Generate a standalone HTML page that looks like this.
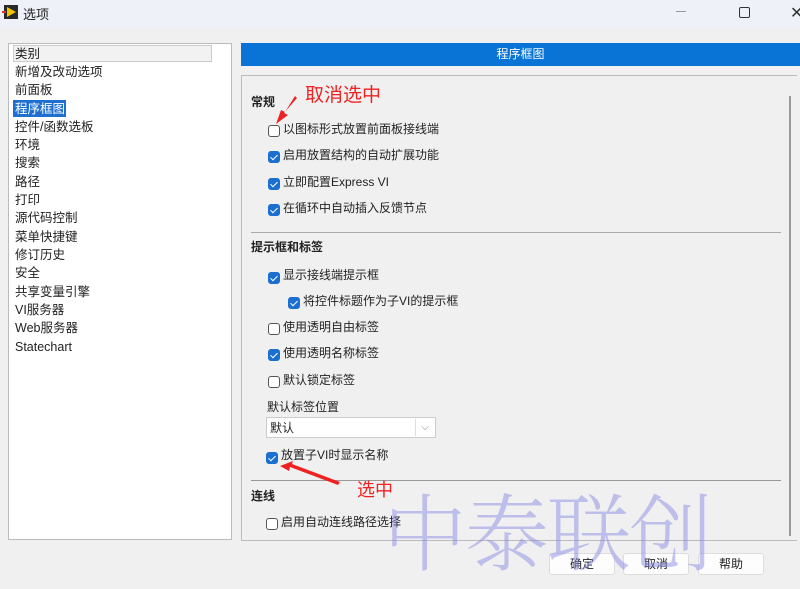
<!DOCTYPE html>
<html><head><meta charset="utf-8"><style>
*{margin:0;padding:0;box-sizing:border-box}
body{width:800px;height:579px;background:#f0f0f0;font-family:"Liberation Sans","Noto Sans CJK SC",sans-serif;font-size:12px;color:#222;position:relative;overflow:hidden}
.abs{position:absolute}
.title{left:0;top:0;width:800px;height:27px;background:#eef1f7}
.list{left:8px;top:43px;width:224px;height:497px;background:#fff;border:1px solid #bbb}
.item{position:absolute;left:6px;font-size:12.5px;line-height:16px;white-space:nowrap}
.cb{position:absolute;width:12px;height:12px;border:1px solid #555;border-radius:3px;background:#fff}
.cb.on{background:#1a6fd1;border-color:#1a6fd1}
.cb.on:after{content:"";position:absolute;left:3px;top:1px;width:3px;height:6px;border:solid #fff;border-width:0 1.5px 1.5px 0;transform:rotate(45deg)}
.lbl{position:absolute;font-size:12px;white-space:nowrap;line-height:14px}
.h{position:absolute;font-weight:bold;font-size:12px}
.btn{position:absolute;top:553px;width:66px;height:22px;background:#fdfdfd;border:1px solid #ddd;border-radius:3px;text-align:center;line-height:20px;font-size:12px}
</style></head><body>
<div class="abs title"></div>
<svg class="abs" style="left:2px;top:3px" width="18" height="18"><rect x="2" y="2" width="14" height="14" fill="#2a2a2a"/><polygon points="5,4 14,9 5,14" fill="#f5c400"/><rect x="0" y="8" width="4" height="2" fill="#d33"/></svg>
<div class="abs" style="left:23px;top:4px;font-size:13px">选项</div>
<div class="abs" style="left:676px;top:11px;width:10px;height:1px;background:#999"></div>
<div class="abs" style="left:739px;top:7px;width:11px;height:11px;border:1.5px solid #333;border-radius:2px"></div>
<div class="abs" style="left:790px;top:3px;font-size:16px;color:#333">✕</div>

<div class="abs list">
 <div class="abs" style="left:4px;top:1px;width:199px;height:17px;background:#f2f2f2;border:1px solid #ccc"></div>
 <div class="item" style="top:2px">类别</div>
 <div class="item" style="top:20px">新增及改动选项</div>
 <div class="item" style="top:38px">前面板</div>
 <div class="abs" style="left:4px;top:56px;width:53px;height:17px;background:#1f6fd0"></div>
 <div class="item" style="top:57px;color:#fff">程序框图</div>
 <div class="item" style="top:75px">控件/函数选板</div>
 <div class="item" style="top:93px">环境</div>
 <div class="item" style="top:111px">搜索</div>
 <div class="item" style="top:130px">路径</div>
 <div class="item" style="top:148px">打印</div>
 <div class="item" style="top:166px">源代码控制</div>
 <div class="item" style="top:185px">菜单快捷键</div>
 <div class="item" style="top:203px">修订历史</div>
 <div class="item" style="top:221px">安全</div>
 <div class="item" style="top:240px">共享变量引擎</div>
 <div class="item" style="top:258px">VI服务器</div>
 <div class="item" style="top:276px">Web服务器</div>
 <div class="item" style="top:295px">Statechart</div>
</div>

<div class="abs" style="left:241px;top:43px;width:559px;height:23px;background:#0a74d6;color:#fff;text-align:center;line-height:23px;font-size:12px">程序框图</div>
<div class="abs" style="left:241px;top:75px;width:556px;height:466px;border:1px solid #bbb;border-right:none"></div>
<div class="abs" style="left:789px;top:96px;width:2px;height:440px;background:#999"></div>

<div class="h" style="left:251px;top:93px">常规</div>
<div class="cb" style="left:268px;top:125px"></div><div class="lbl" style="left:283px;top:122px">以图标形式放置前面板接线端</div>
<div class="cb on" style="left:268px;top:151px"></div><div class="lbl" style="left:283px;top:148px">启用放置结构的自动扩展功能</div>
<div class="cb on" style="left:268px;top:178px"></div><div class="lbl" style="left:283px;top:175px">立即配置Express VI</div>
<div class="cb on" style="left:268px;top:204px"></div><div class="lbl" style="left:283px;top:201px">在循环中自动插入反馈节点</div>
<div class="abs" style="left:251px;top:232px;width:530px;height:1px;background:#aaa"></div>
<div class="h" style="left:251px;top:238px">提示框和标签</div>
<div class="cb on" style="left:268px;top:272px"></div><div class="lbl" style="left:283px;top:268px">显示接线端提示框</div>
<div class="cb on" style="left:288px;top:297px"></div><div class="lbl" style="left:303px;top:294px">将控件标题作为子VI的提示框</div>
<div class="cb" style="left:268px;top:323px"></div><div class="lbl" style="left:283px;top:320px">使用透明自由标签</div>
<div class="cb on" style="left:268px;top:349px"></div><div class="lbl" style="left:283px;top:346px">使用透明名称标签</div>
<div class="cb" style="left:268px;top:376px"></div><div class="lbl" style="left:283px;top:373px">默认锁定标签</div>
<div class="lbl" style="left:267px;top:400px">默认标签位置</div>
<div class="abs" style="left:266px;top:417px;width:170px;height:21px;background:#fff;border:1px solid #ccc"></div>
<div class="lbl" style="left:270px;top:421px">默认</div>
<div class="abs" style="left:415px;top:419px;width:19px;height:17px;border-left:1px solid #ddd;color:#888;text-align:center;font-size:10px;line-height:17px">⌵</div>
<div class="cb on" style="left:266px;top:452px"></div><div class="lbl" style="left:281px;top:448px">放置子VI时显示名称</div>
<div class="abs" style="left:251px;top:480px;width:530px;height:1px;background:#999"></div>
<div class="h" style="left:251px;top:487px">连线</div>
<div class="cb" style="left:266px;top:518px"></div><div class="lbl" style="left:281px;top:515px">启用自动连线路径选择</div>

<div class="btn" style="left:549px">确定</div>
<div class="btn" style="left:623px">取消</div>
<div class="btn" style="left:698px">帮助</div>

<div class="abs" style="left:305px;top:80px;color:#ee2222;font-size:19px">取消选中</div>
<div class="abs" style="left:357px;top:476px;color:#ee2222;font-size:18px">选中</div>
<svg class="abs" style="left:0;top:0" width="800" height="579">
<polygon points="295,96 285,112 281,110 276,124 288,115 284,113 297,98" fill="#ee2222"/>
<polygon points="280,466 293,461 292,464 340,482 338,485 290,467 289,471" fill="#ee2222"/>
</svg>
<div class="abs" style="left:383px;top:468px;font-family:'Noto Serif CJK SC',serif;font-weight:300;font-size:84px;color:rgba(140,140,230,0.5);letter-spacing:-2px;white-space:nowrap">中泰联创</div>
</body></html>
